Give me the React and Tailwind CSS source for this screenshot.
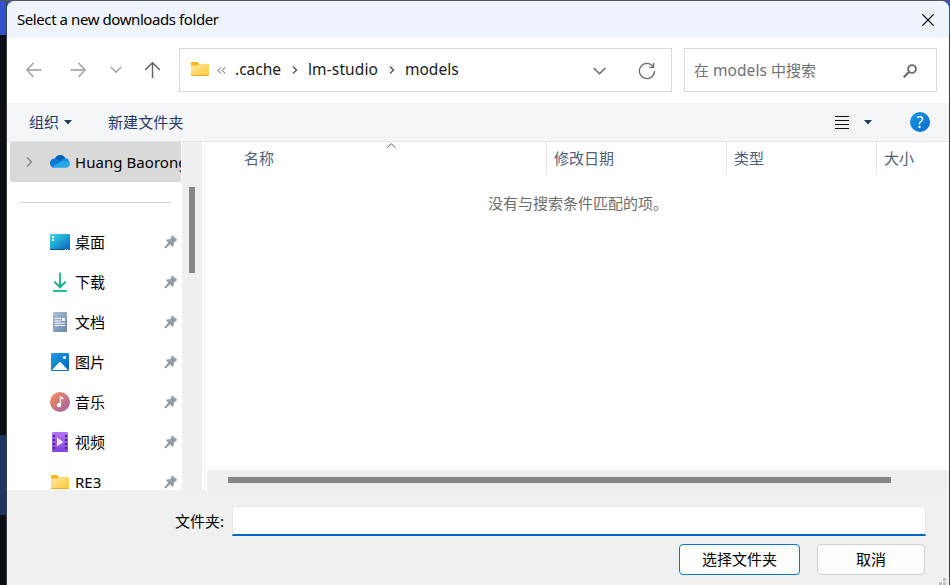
import { useState } from "react";
import clsx from "clsx";

const FolderIcon = ({ className }) => (
  <svg width="20" height="20" viewBox="0 0 20 20" className={clsx("shrink-0", className)}>
    <defs>
      <linearGradient id="folder" x1="0" y1="0" x2="1" y2="1">
        <stop offset="0" stopColor="#ffe8a0" />
        <stop offset="1" stopColor="#ffc937" />
      </linearGradient>
    </defs>
    <path d="M1 4a1 1 0 0 1 1-1h5.500L9 5h9a1 1 0 0 1 1 1v3H1z" fill="#f8b51c" />
    <path d="M1 6.500h6.500L9 5h9a1 1 0 0 1 1 1v10a1 1 0 0 1-1 1H2a1 1 0 0 1-1-1z" fill="url(#folder)" />
    <path d="M1 16h18a1 1 0 0 1-1 1H2a1 1 0 0 1-1-1z" fill="#eeac2c" />
  </svg>
);

const CloudIcon = () => (
  <svg width="20" height="20" viewBox="0 0 20 20" className="shrink-0">
    <path d="M5 6.500a5.600 5.600 0 0 1 10.300-.4L12 11 4 8z" fill="#0364b8" />
    <path d="M4.300 15.800A4.700 4.700 0 0 1 5 6.400c1.300-.1 2.200.3 3 .8l5 3-8 5z" fill="#0f78d4" />
    <path d="M15.300 6.100a4.700 4.700 0 0 1 3.900 3.500l-2.200 2-6-2.200c1-1.700 2.300-3.300 4.300-3.300z" fill="#1490df" />
    <path d="M1.800 14.900 11.500 9.200l7.700.4A4 4 0 0 1 16 15.800H4.300a5 5 0 0 1-2.500-.9z" fill="#28a8ea" />
  </svg>
);

const DesktopIcon = () => (
  <svg width="20" height="20" viewBox="0 0 20 20" className="shrink-0">
    <defs>
      <linearGradient id="desktop" x1="0" y1="0" x2="1" y2="1">
        <stop offset="0" stopColor="#36d9e6" />
        <stop offset="1" stopColor="#0c63bd" />
      </linearGradient>
    </defs>
    <rect y="2" width="20" height="16" rx="1" fill="url(#desktop)" />
    <path d="M0 17h20a1 1 0 0 1-1 1H1a1 1 0 0 1-1-1z" fill="#0b4c8c" />
    <path d="M2 4h2v2H2zM2 7h2v2H2zM15 17h1v1h-1zM17 17h1v1h-1z" fill="#fff" />
  </svg>
);

const DownloadIcon = () => (
  <svg width="20" height="20" viewBox="0 0 20 20" fill="none" className="shrink-0">
    <defs>
      <linearGradient id="download" x1="0" y1="0" x2="0" y2="20" gradientUnits="userSpaceOnUse">
        <stop offset="0" stopColor="#35c98c" />
        <stop offset="1" stopColor="#12a08e" />
      </linearGradient>
    </defs>
    <path d="M10 0.500V15M4.200 9.500L10 15.300l5.800-5.800" stroke="url(#download)" strokeWidth="2" />
    <path d="M3 19h14" stroke="#2dbd8c" strokeWidth="2" />
  </svg>
);

const DocumentIcon = () => (
  <svg width="20" height="20" viewBox="0 0 20 20" className="shrink-0">
    <defs>
      <linearGradient id="document" x1="0" y1="0" x2="1" y2="1">
        <stop offset="0" stopColor="#adc2d8" />
        <stop offset="1" stopColor="#6784a8" />
      </linearGradient>
    </defs>
    <rect x="3" width="14" height="20" rx="1" fill="url(#document)" />
    <path d="M5 6h6v1H5zM5 8.500h6v1H5zM12 6h3v3h-3zM5 10.700h10v1H5zM5 13h10v1H5z" fill="#fff" />
  </svg>
);

const PictureIcon = () => (
  <svg width="20" height="20" viewBox="0 0 20 20" className="shrink-0">
    <defs>
      <linearGradient id="picture" x1="0" y1="0" x2="1" y2="1">
        <stop offset="0" stopColor="#1b9fe6" />
        <stop offset="1" stopColor="#0862b4" />
      </linearGradient>
    </defs>
    <rect x="1" y="1" width="18" height="18" rx="1.200" fill="url(#picture)" />
    <path d="M2 18l7.300-7.700a1 1 0 0 1 1.400 0L18 18z" fill="#f5fbff" />
    <circle cx="14.500" cy="5.500" r="1.600" fill="#fff" />
  </svg>
);

const MusicIcon = () => (
  <svg width="20" height="20" viewBox="0 0 20 20" className="shrink-0">
    <defs>
      <linearGradient id="music" x1="0" y1="0" x2="1" y2="1">
        <stop offset="0.100" stopColor="#f08c5a" />
        <stop offset="0.900" stopColor="#a862a8" />
      </linearGradient>
    </defs>
    <circle cx="10" cy="10" r="10" fill="url(#music)" />
    <path d="M9.800 4.300c1.500.2 3.400.8 3.800 2v1.200c-.8-.7-1.500-1-2.500-1.100v6.800a2.100 2.100 0 1 1-1.300-2z" fill="#fff" />
  </svg>
);

const VideoIcon = () => (
  <svg width="20" height="20" viewBox="0 0 20 20" className="shrink-0">
    <defs>
      <linearGradient id="video" x1="0" y1="0" x2="0" y2="1">
        <stop offset="0" stopColor="#b476f2" />
        <stop offset="1" stopColor="#8340e0" />
      </linearGradient>
    </defs>
    <rect x="2" width="16" height="20" rx="1" fill="url(#video)" />
    <path
      d="M3 3h2v2H3zM3 7h2v2H3zM3 11h2v2H3zM3 15h2v2H3zM15 3h2v2h-2zM15 7h2v2h-2zM15 11h2v2h-2zM15 15h2v2h-2z"
      fill="#46247c"
    />
    <path d="M7 5.500l6.500 4.500L7 14.500z" fill="#f0e6fb" />
  </svg>
);

const PinIcon = () => (
  <svg width="14" height="14" viewBox="0 0 14 14" fill="#929da4" className="shrink-0">
    <path d="M7.600 1.200C7.900.5 8.500.4 9 .9l3.700 3.400c.5.500.4 1-.3 1.400L10.200 7l-.8 4.100c-.2.700-.8.900-1.300.4L6.100 9.500 2 13l-1.700.4.500-1.600 3.500-4.100-1.800-1.900c-.5-.6-.3-1.100.4-1.300l3.600-.6z" />
  </svg>
);

const places = [
  { name: "桌面", icon: DesktopIcon },
  { name: "下载", icon: DownloadIcon },
  { name: "文档", icon: DocumentIcon },
  { name: "图片", icon: PictureIcon },
  { name: "音乐", icon: MusicIcon },
  { name: "视频", icon: VideoIcon },
  { name: "RE3", icon: FolderIcon },
];

const columns = [
  { name: "名称", width: "w-[342px] pl-[39px] border-r", sorted: true },
  { name: "修改日期", width: "w-[180px] pl-[7px] border-r" },
  { name: "类型", width: "w-[150px] pl-[7px] border-r" },
  { name: "大小", width: "grow pl-[7px]" },
];

const Crumb = ({ children, className }) => (
  <span className={clsx("text-[15.500px] whitespace-nowrap text-[#1a1a1a]", className)}>{children}</span>
);

const CrumbArrow = () => (
  <svg width="6" height="8" viewBox="0 0 6 8" fill="none" stroke="#555" strokeWidth="1.400" className="shrink-0">
    <path d="M1 0.500L4.500 4L1 7.500" />
  </svg>
);

function TitleBar() {
  return (
    <div className="flex h-[37px] shrink-0 items-center justify-between bg-[#eff3fb] pl-[10px] pr-[15px]">
      <span className="text-[15px] tracking-[-0.420px]">Select a new downloads folder</span>
      <svg width="12" height="12" viewBox="0 0 12 12" fill="none" stroke="#000" strokeWidth="1.200">
        <path d="M0.300 0.300L11.700 11.700M11.700 0.300L0.300 11.700" />
      </svg>
    </div>
  );
}

function NavBar() {
  return (
    <div className="flex h-[65px] shrink-0 items-center pr-3 pb-[1px]">
      <div className="flex w-[172px] items-center pl-[19px] text-[#9b9b9b]">
        <svg width="16" height="16" viewBox="0 0 16 16" fill="none" stroke="currentColor" strokeWidth="1.300">
          <path d="M15.500 8H1M7.500 1L0.800 8L7.500 15" />
        </svg>
        <svg width="16" height="16" viewBox="0 0 16 16" fill="none" stroke="currentColor" strokeWidth="1.300" className="ml-7">
          <path d="M0.500 8H15M8.500 1L15.200 8L8.500 15" />
        </svg>
        <svg width="12" height="8" viewBox="0 0 12 8" fill="none" stroke="currentColor" strokeWidth="1.300" className="-mt-[1px] ml-6">
          <path d="M0.700 1L6 6.300L11.300 1" />
        </svg>
        <svg width="17" height="16" viewBox="0 0 17 16" fill="none" stroke="#5f5f5f" strokeWidth="1.400" className="ml-[22px]">
          <path d="M8.500 16V0.800M1.200 8L8.500 0.700L15.800 8" />
        </svg>
      </div>
      <div className="flex h-11 w-[493px] items-center border border-[#d9d9d9] pl-[10px]">
        <FolderIcon className="-mt-[2px]" />
        <svg width="9" height="7" viewBox="0 0 9 7" fill="none" stroke="#555" className="ml-[7px] shrink-0">
          <path d="M4 0.500L1 3.500L4 6.500M8.200 0.500L5.200 3.500L8.200 6.500" />
        </svg>
        <div className="flex w-[363px] items-center pl-[9px]">
          <Crumb className="w-[57px]">.cache</Crumb>
          <CrumbArrow />
          <Crumb className="ml-[10px] w-[81px] tracking-[0.120px]">lm-studio</Crumb>
          <CrumbArrow />
          <Crumb className="ml-[10px]">models</Crumb>
        </div>
        <svg width="13" height="8" viewBox="0 0 13 8" fill="none" stroke="#666" strokeWidth="1.400" className="mt-[2px] ml-1">
          <path d="M0.700 1L6.500 6.800L12.300 1" />
        </svg>
        <svg width="18" height="18" viewBox="0 0 18 18" fill="none" stroke="#6b6b6b" strokeWidth="1.300" className="mt-[2px] ml-8">
          <path d="M15.200 4.600A7.600 7.600 0 1 0 16.600 9M15.600 1V5.300H11.200" />
        </svg>
      </div>
      <div className="ml-3 flex h-11 grow items-center justify-between border border-[#d9d9d9] pr-[19px] pl-[9px] text-[#707070]">
        <span className="pt-[1px] text-[15px]">
          在 <span className="text-[15.500px] tracking-[0.100px]">models</span> 中搜索
        </span>
        <svg width="14" height="14" viewBox="0 0 14 14" fill="none" stroke="#6b6b6b" strokeWidth="1.900" className="mt-[1px]">
          <circle cx="9" cy="5" r="3.900" />
          <path d="M6.200 7.800L0.700 13.300" strokeWidth="2.200" />
        </svg>
      </div>
    </div>
  );
}

function Toolbar() {
  return (
    <div className="flex h-[39px] shrink-0 items-center border-b border-[#e3e6e9] bg-[#f4f5f7] pr-[19px] pl-[22px] text-[15px] text-[#1f3a66]">
      <span>组织</span>
      <svg width="8" height="5" viewBox="0 0 8 5" fill="#1f3a66" className="ml-[5px]">
        <path d="M0 0h8L4 4.500z" />
      </svg>
      <span className="ml-9 tracking-[0.100px]">新建文件夹</span>
      <div className="ml-auto flex h-5 w-5 items-center justify-center bg-[#f0f1f2]">
        <svg width="14" height="13" viewBox="0 0 14 13" fill="#111">
          <path d="M0 0h14v1H0zM0 4h14v1H0zM0 8h14v1H0zM0 12h14v1H0z" />
        </svg>
      </div>
      <svg width="8" height="5" viewBox="0 0 8 5" fill="#1f3a66" className="ml-3">
        <path d="M0 0h8L4 4.500z" />
      </svg>
      <div className="ml-[38px] flex h-5 w-5 items-center justify-center rounded-full bg-linear-to-br from-[#1c9be8] to-[#0569c5] text-[16px] leading-none text-white">
        ?
      </div>
    </div>
  );
}

function Sidebar() {
  return (
    <div className="flex w-[195px] shrink-0 pl-[3px]">
      <div className="w-[172px] overflow-hidden text-[15px]">
        <div className="flex h-10 w-[171px] items-center overflow-hidden rounded-l-[2px] bg-[#d9d9d9] pl-4">
          <svg width="7" height="10" viewBox="0 0 7 10" fill="none" stroke="#858585" strokeWidth="1.400" className="shrink-0">
            <path d="M1 0.500L5.500 5L1 9.500" />
          </svg>
          <div className="ml-[17px]">
            <CloudIcon />
          </div>
          <span className="ml-[5px] whitespace-nowrap tracking-[0.050px]">Huang Baorong</span>
        </div>
        <div className="flex h-10 items-center">
          <div className="ml-[10px] h-px w-[151px] bg-[#d5d5d5]" />
        </div>
        {places.map((place) => (
          <div key={place.name} className="flex h-10 items-center pr-1 pl-10">
            <place.icon />
            <span className="ml-[5px] grow">{place.name}</span>
            <PinIcon />
          </div>
        ))}
      </div>
      <div className="w-5 bg-[#efefef] pt-[45px] pl-[7px]">
        <div className="h-[86px] w-[6px] bg-[#868686]" />
      </div>
    </div>
  );
}

function FileList() {
  return (
    <div className="ml-[2px] flex grow flex-col border-l border-[#f3f3f3]">
      <div className="flex h-8">
        {columns.map((column) => (
          <div
            key={column.name}
            className={clsx("relative flex items-center border-[#e3e3e3] text-[15px] text-[#4c607a]", column.width)}
          >
            {column.name}
            {column.sorted && (
              <svg width="10" height="6" viewBox="0 0 10 6" fill="none" stroke="#666" className="absolute top-[1px] left-[181px]">
                <path d="M0.800 5L5.300 0.700L9.800 5" />
              </svg>
            )}
          </div>
        ))}
      </div>
      <div className="grow pt-[18px] pl-[283px] text-[15px] text-[#6d6d6d]">没有与搜索条件匹配的项。</div>
      <div className="ml-[2px] h-5 bg-[#efefef] pt-[7px] pl-[21px]">
        <div className="h-[6px] w-[663px] bg-[#868686]" />
      </div>
    </div>
  );
}

function Footer() {
  const [folder, setFolder] = useState("");

  return (
    <div className="relative h-[95px] shrink-0 bg-[#f0f0f0] pt-4 pr-[23px] text-[15px]">
      <div className="flex items-center justify-end">
        <label htmlFor="folder-name" className="mr-[8px]">
          文件夹:
        </label>
        <input
          id="folder-name"
          value={folder}
          onChange={(e) => setFolder(e.target.value)}
          className="h-[30px] w-[694px] border border-b-2 border-[#e8e8e8] border-b-[#0067c0] bg-white px-1 outline-none"
        />
      </div>
      <div className="mt-2 flex justify-end gap-[17px] pr-[1px]">
        <button className="h-[31px] w-[121px] rounded-[4px] border border-[#0078d4] bg-[#fdfdfd]">选择文件夹</button>
        <button className="h-[31px] w-[108px] rounded-[4px] border border-[#d0d0d0] bg-[#fdfdfd]">取消</button>
      </div>
      <svg width="7" height="7" viewBox="0 0 7 7" fill="#bfbfbf" className="absolute right-[3px] bottom-0">
        <path d="M4 0h3v3H4zM0 4h3v3H0zM4 4h3v3H4z" />
      </svg>
    </div>
  );
}

export default function App() {
  return (
    <div className="flex h-[585px] w-[950px] overflow-hidden bg-[#3b3d42] font-['Noto_Sans','Noto_Sans_CJK_SC',sans-serif] text-black">
      <div className="flex h-full w-full flex-col border-t border-[#58585b] bg-linear-to-b from-[#3350cf] from-[34px] to-transparent to-[34px]">
        <div className="flex h-[584px]">
          <div className="flex w-[7px] shrink-0 flex-col border-r border-[#3c3f44]">
            <div className="h-[34px] bg-[#3350cf]" />
            <div className="h-[400px] bg-[#0b0f14]" />
            <div className="h-[80px] bg-[#1d355f]" />
            <div className="grow bg-[#0b0f14]" />
          </div>
          <div className="flex w-[942px] flex-col overflow-hidden rounded-t-lg bg-white">
            <TitleBar />
            <NavBar />
            <Toolbar />
            <div className="flex h-[348px] shrink-0 overflow-hidden">
              <Sidebar />
              <FileList />
            </div>
            <Footer />
          </div>
        </div>
      </div>
    </div>
  );
}
